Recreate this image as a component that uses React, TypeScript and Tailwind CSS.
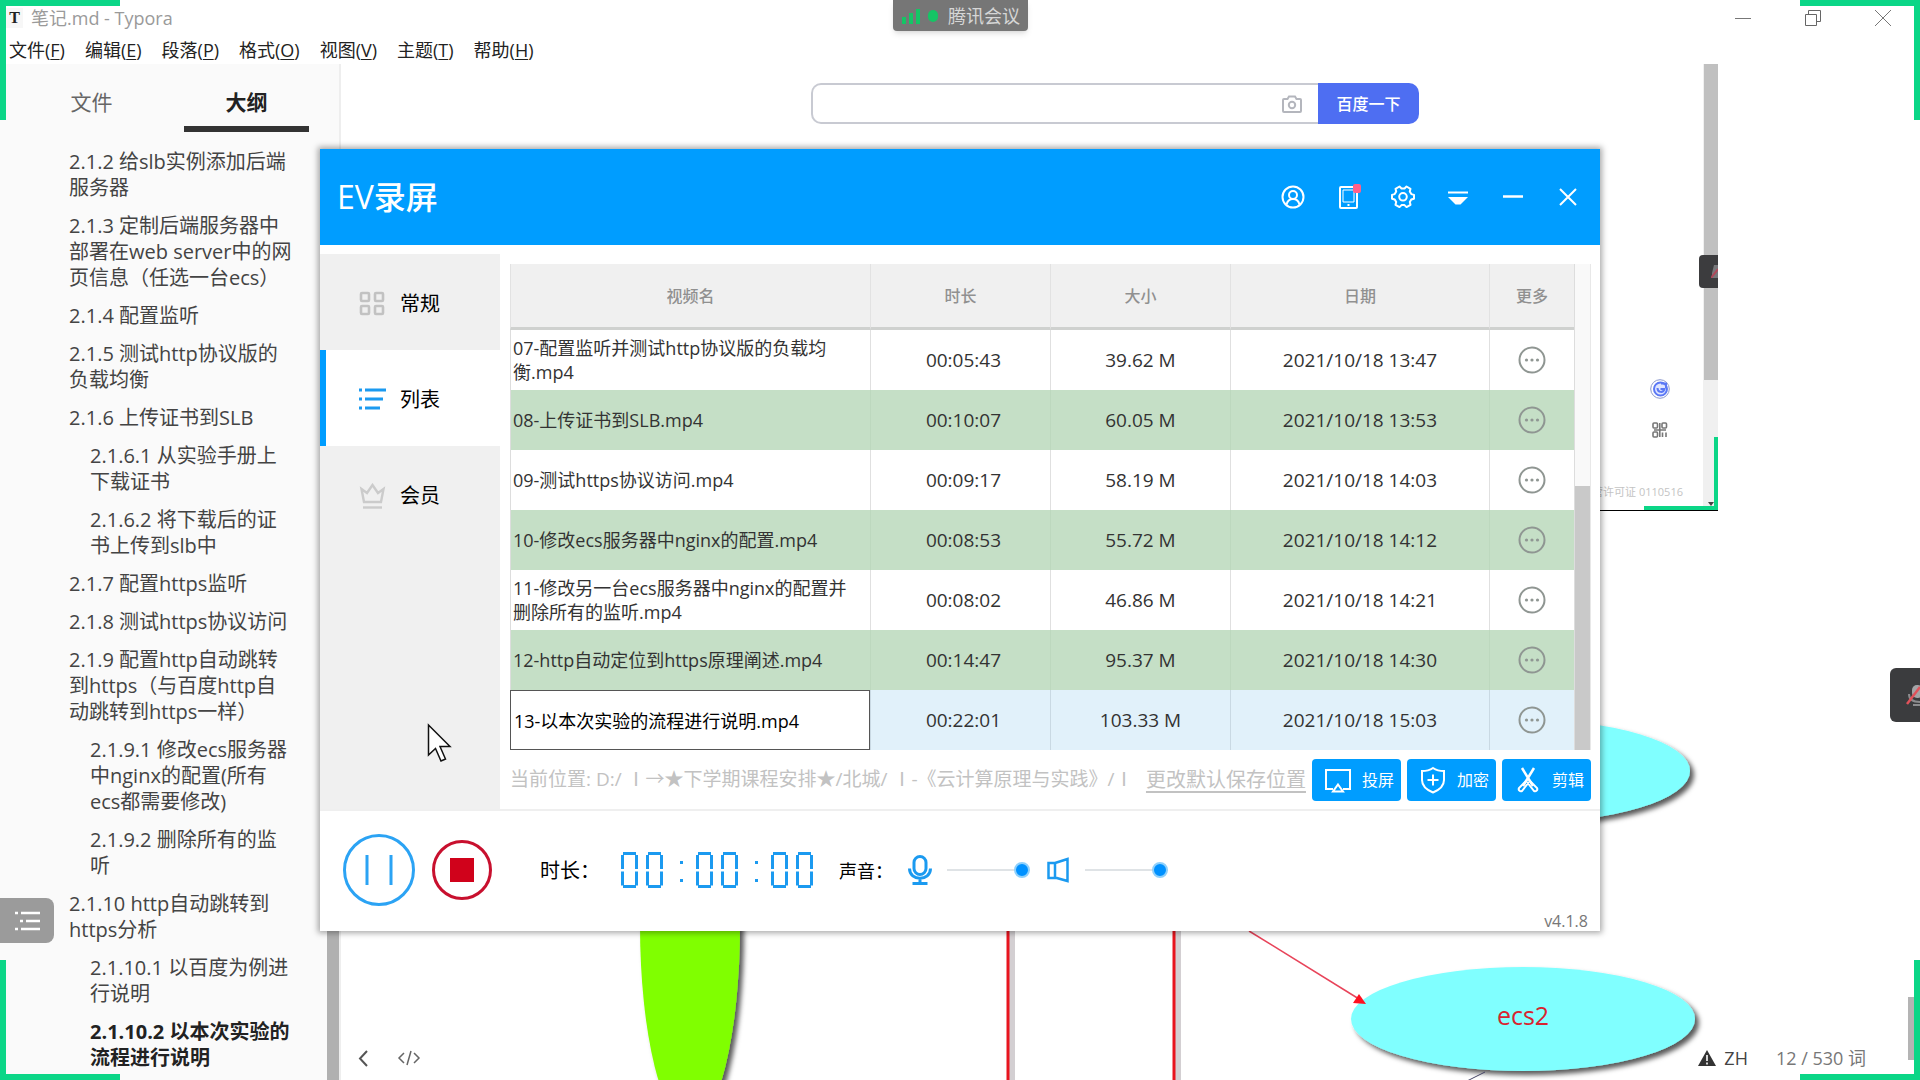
import type { ReactNode } from "react";

const FONT = "font-['Open_Sans','Noto_Sans_CJK_SC',sans-serif]";

const menus: [string, string][] = [
  ["文件", "F"],
  ["编辑", "E"],
  ["段落", "P"],
  ["格式", "O"],
  ["视图", "V"],
  ["主题", "T"],
  ["帮助", "H"],
];

const outline: { text: string; deep?: boolean; active?: boolean }[] = [
  { text: "2.1.2 给slb实例添加后端\n服务器" },
  { text: "2.1.3 定制后端服务器中\n部署在web server中的网\n页信息（任选一台ecs）" },
  { text: "2.1.4 配置监听" },
  { text: "2.1.5 测试http协议版的\n负载均衡" },
  { text: "2.1.6 上传证书到SLB" },
  { text: "2.1.6.1 从实验手册上\n下载证书", deep: true },
  { text: "2.1.6.2 将下载后的证\n书上传到slb中", deep: true },
  { text: "2.1.7 配置https监听" },
  { text: "2.1.8 测试https协议访问" },
  { text: "2.1.9 配置http自动跳转\n到https（与百度http自\n动跳转到https一样）" },
  { text: "2.1.9.1 修改ecs服务器\n中nginx的配置(所有\necs都需要修改)", deep: true },
  { text: "2.1.9.2 删除所有的监\n听", deep: true },
  { text: "2.1.10 http自动跳转到\nhttps分析" },
  { text: "2.1.10.1 以百度为例进\n行说明", deep: true },
  { text: "2.1.10.2 以本次实验的\n流程进行说明", deep: true, active: true },
];

const videos = [
  ["07-配置监听并测试http协议版的负载均\n衡.mp4", "00:05:43", "39.62 M", "2021/10/18 13:47"],
  ["08-上传证书到SLB.mp4", "00:10:07", "60.05 M", "2021/10/18 13:53"],
  ["09-测试https协议访问.mp4", "00:09:17", "58.19 M", "2021/10/18 14:03"],
  ["10-修改ecs服务器中nginx的配置.mp4", "00:08:53", "55.72 M", "2021/10/18 14:12"],
  ["11-修改另一台ecs服务器中nginx的配置并\n删除所有的监听.mp4", "00:08:02", "46.86 M", "2021/10/18 14:21"],
  ["12-http自动定位到https原理阐述.mp4", "00:14:47", "95.37 M", "2021/10/18 14:30"],
  ["13-以本次实验的流程进行说明.mp4", "00:22:01", "103.33 M", "2021/10/18 15:03"],
];

function TitleBar() {
  return (
    <header className="flex h-[35px] items-center pl-[6px] pr-[29px] text-[#9a9a9a]">
      <span className="flex h-5 w-[17px] items-center justify-center bg-[#f7f7f7] font-['Liberation_Serif',serif] text-base font-bold text-[#222]">
        T
      </span>
      <h1 className="ml-2 text-lg">笔记.md - Typora</h1>
      <div className="ml-auto flex gap-[54px]">
        <button aria-label="最小化">
          <svg width="16" height="16" viewBox="0 0 16 16" stroke="#777" fill="none">
            <path d="M0 8.500h16" />
          </svg>
        </button>
        <button aria-label="还原">
          <svg width="16" height="16" viewBox="0 0 16 16" stroke="#666" fill="none">
            <path d="M.5 4.500h11v11H.5zM3.500 4.500v-4h12v11h-4" />
          </svg>
        </button>
        <button aria-label="关闭">
          <svg width="16" height="16" viewBox="0 0 16 16" stroke="#777" fill="none">
            <path d="M0 0l16 16M16 0L0 16" />
          </svg>
        </button>
      </div>
    </header>
  );
}

function MenuBar() {
  return (
    <nav className="flex h-[29px] items-center gap-5 pl-[9px] text-lg text-[#222]">
      {menus.map(([name, key]) => (
        <button key={key} className="whitespace-nowrap">
          {name}(<u className="underline-offset-2">{key}</u>)
        </button>
      ))}
    </nav>
  );
}

function Outline() {
  return (
    <aside className="w-[341px] shrink-0 border-r-2 border-[#eee] bg-[#fafafa]">
      <div className="flex gap-[30px] pl-[29px] pt-3 text-[21px]">
        <button className="h-14 w-[125px] border-b-[6px] border-transparent pt-[3px] text-[#666]">文件</button>
        <button className="h-14 w-[125px] border-b-[6px] border-[#333] pt-[3px] font-bold text-[#222]">大纲</button>
      </div>
      <ul className="pt-[11px] text-xl leading-[26px] text-[#444]">
        {outline.map((o) => (
          <li key={o.text} className={o.deep ? "py-[6px] pl-[90px]" : "py-[6px] pl-[69px]"}>
            <a href="#outline" className={o.active ? "block whitespace-pre font-bold text-[#222]" : "block whitespace-pre"}>
              {o.text}
            </a>
          </li>
        ))}
      </ul>
    </aside>
  );
}

function BaiduPage() {
  return (
    <div className="relative h-[447px] w-[1377px] max-w-full shrink-0 border-b border-black">
      <form className="ml-[470px] flex w-[608px] pt-[19px]">
        <div className="flex h-[41px] flex-1 items-center rounded-l-[10px] border-2 border-r-0 border-[#c8cad2] pr-4">
          <input aria-label="搜索" className="min-w-0 flex-1 px-3 outline-none" />
          <svg width="20" height="18" viewBox="0 0 20 18" fill="none" stroke="#b4b6bd" strokeWidth="2">
            <path d="M2 4h3.500l1.500-2.500h6L14.500 4H18a1 1 0 011 1v11a1 1 0 01-1 1H2a1 1 0 01-1-1V5a1 1 0 011-1z" />
            <circle cx="10" cy="10" r="3.200" />
          </svg>
        </div>
        <button type="button" className="h-[41px] w-[101px] rounded-r-[10px] bg-[#4e6ef2] text-base font-medium text-white">
          百度一下
        </button>
      </form>
      <div className="absolute bottom-0 right-0 top-0 flex w-[15px] flex-col items-center bg-[#f0f0f0]">
        <div className="h-[316px] w-[14px] bg-[#c0c0c0]" />
        <svg className="mb-1 mt-auto" width="6" height="4" viewBox="0 0 6 4" fill="#444">
          <path d="M0 0h6L3 4z" />
        </svg>
      </div>
      <div className="absolute right-0 top-[191px] flex h-[33px] w-[19px] items-center justify-end rounded-l bg-[#3c3c3e]">
        <svg width="7" height="13" viewBox="0 0 7 13">
          <path d="M3 0h4v13H1V8z" fill="#77777a" />
          <path d="M0 13l7-9" stroke="#b0485a" strokeWidth="2" />
        </svg>
      </div>
      <div className="absolute bottom-0 right-0 h-[73px] w-[4px] bg-[#0bd687]" />
      <div className="absolute bottom-0 right-0 h-[4px] w-[74px] bg-[#0bd687]" />
      <div className="absolute right-[48px] top-[315px] flex flex-col items-center gap-[23px]">
        <svg width="20" height="20" viewBox="0 0 20 20" fill="none">
          <circle cx="10" cy="10" r="9.300" stroke="#8c98cc" />
          <circle cx="10.500" cy="10" r="6.500" fill="#dfe5ff" stroke="#5b78f5" strokeWidth="2" />
          <path d="M7.500 9c0 5 6 5 7 1h-4M11 4.500h5V9" stroke="#5b78f5" strokeWidth="2" />
        </svg>
        <svg width="16" height="16" viewBox="0 0 16 16" fill="none" stroke="#777" strokeWidth="1.600">
          <rect x="1" y="1" width="4.500" height="5" rx="1" />
          <rect x="10" y="1" width="4.500" height="5" rx="1" />
          <rect x="1" y="10" width="4.500" height="5" rx="1" />
          <path d="M7.800 1v14M2 8h12M10.500 10.500V15M14 10.500V15" />
        </svg>
      </div>
      <span className="absolute bottom-[10px] right-[35px] whitespace-nowrap text-[11px] leading-4 text-[#c4c4c4]">
        经营许可证 0110516
      </span>
    </div>
  );
}

function Diagram() {
  return (
    <svg className="block w-full" viewBox="341 511 1579 569" role="img" aria-label="负载均衡拓扑图">
      <defs>
        <filter id="shadow" x="-20%" y="-20%" width="140%" height="140%">
          <feDropShadow dx="4" dy="4" stdDeviation="2.500" floodOpacity="0.650" />
        </filter>
      </defs>
      <ellipse cx="690" cy="925" rx="50" ry="200" fill="#80ff00" filter="url(#shadow)" />
      <g fill="#80ffff" filter="url(#shadow)">
        <ellipse cx="1518" cy="771" rx="172" ry="52" />
        <ellipse cx="1523" cy="1019" rx="172" ry="52" />
      </g>
      <path d="M1012 900v180M1178 900v180" stroke="#d3cfd2" strokeWidth="6" />
      <path d="M1008 900v180M1174 900v180" stroke="#e8141e" strokeWidth="3" />
      <path d="M1249 931l110 68" stroke="#e8445a" strokeWidth="1.500" />
      <path d="M1366 1004l-13-1 6-9z" fill="#ff1020" />
      <path d="M1485 1072l-18 9" stroke="#446" />
      <text x="1523" y="1025" textAnchor="middle" fontSize="25" fill="#d8232f">
        ecs2
      </text>
    </svg>
  );
}

function StatusBar() {
  return (
    <div className="absolute bottom-2 left-[341px] right-[54px] flex h-7 items-center text-lg text-[#777]">
      <button aria-label="返回" className="ml-[17px]">
        <svg width="10" height="17" viewBox="0 0 10 17" fill="none" stroke="#555" strokeWidth="2">
          <path d="M9 1L2 8.500 9 16" />
        </svg>
      </button>
      <button aria-label="源代码模式" className="ml-[29px]">
        <svg width="24" height="16" viewBox="0 0 24 16" fill="none" stroke="#666" strokeWidth="1.500">
          <path d="M7 3L2 8l5 5M17 3l5 5-5 5M14 1l-4 14" />
        </svg>
      </button>
      <svg className="ml-auto" width="18" height="16" viewBox="0 0 18 16">
        <path d="M9 0l9 16H0z" fill="#333" />
        <path d="M9 5v6M9 12.500v2" stroke="#fff" strokeWidth="1.600" />
      </svg>
      <span className="ml-2 text-[#444]">ZH</span>
      <span className="ml-7">12 / 530 词</span>
    </div>
  );
}

function HeaderIcon({ label, children }: { label: string; children: ReactNode }) {
  return (
    <button aria-label={label} className="flex w-[55px] justify-center">
      <svg width="26" height="26" viewBox="0 0 26 26" fill="none" stroke="#fff" strokeWidth="2">
        {children}
      </svg>
    </button>
  );
}

function EvHeader() {
  return (
    <header className="flex h-24 items-center bg-[#009dff] pl-[17px] pr-1 text-white">
      <h2 className="mr-auto text-[32px] font-medium leading-10">EV录屏</h2>
      <HeaderIcon label="账号">
        <circle cx="13" cy="13" r="10.500" />
        <circle cx="13" cy="11" r="4" />
        <path d="M6.500 20.500c1-4 4-5.500 6.500-5.500s5.500 1.500 6.500 5.500" />
      </HeaderIcon>
      <HeaderIcon label="手机">
        <rect x="5" y="3" width="17" height="21" rx="1" />
        <path d="M8 6h11v12H8z" strokeWidth="1" />
        <path d="M12.500 21h2" />
        <rect x="18" y="0" width="8" height="9" rx="2" fill="#ff5f8a" stroke="none" />
      </HeaderIcon>
      <HeaderIcon label="设置">
        <path
          d="M9.500 2.500l2 2h3l2-2 4 2.300-.7 2.700 1.500 2.600 2.700.8v3.800l-2.700.8-1.500 2.600.7 2.700-4 2.300-2-2h-3l-2 2-4-2.300.7-2.700-1.500-2.600-2.700-.8v-3.800l2.700-.8 1.500-2.600-.7-2.700z"
          strokeLinejoin="round"
        />
        <circle cx="13" cy="12.800" r="3.800" />
      </HeaderIcon>
      <HeaderIcon label="菜单">
        <path d="M3 8.500h20" />
        <path d="M3 13h20l-7.500 7.500h-5z" fill="#fff" stroke="none" />
      </HeaderIcon>
      <HeaderIcon label="最小化">
        <path d="M3 12.500h20" strokeWidth="2.500" />
      </HeaderIcon>
      <HeaderIcon label="关闭">
        <path d="M5 5l16 16M21 5L5 21" />
      </HeaderIcon>
    </header>
  );
}

function EvNav() {
  const base = "flex h-24 w-full items-center gap-[14px] border-l-[6px] pl-[33px] pt-[3px] text-xl text-black";
  return (
    <nav className="mt-[9px] w-[180px] shrink-0 bg-[#f0f0f0]">
      <button className={`${base} border-transparent`}>
        <svg width="27" height="26" viewBox="0 0 27 26" fill="none" stroke="#c2c2c2" strokeWidth="2.600">
          <rect x="2" y="2" width="8" height="8" rx="1" />
          <rect x="16" y="2" width="8" height="8" rx="1" />
          <rect x="2" y="15" width="8" height="8" rx="1" />
          <rect x="16" y="15" width="8" height="8" rx="1" />
        </svg>
        常规
      </button>
      <button className={`${base} border-[#009dff] bg-white`}>
        <svg width="27" height="26" viewBox="0 0 27 26" stroke="#1b9af0" strokeWidth="3">
          <path d="M0 3h3M6 3h21M0 12h3M6 12h18M0 21h3M6 21h15" />
        </svg>
        列表
      </button>
      <button className={`${base} border-transparent`}>
        <svg width="27" height="26" viewBox="0 0 27 26" fill="none" stroke="#cbcbcb" strokeWidth="2.400">
          <path d="M2.500 6l5.500 4 5.500-8 5.500 8 5.500-4-2.500 13H5z" />
          <path d="M4 24.500h19" />
        </svg>
        会员
      </button>
    </nav>
  );
}

function VideoTable() {
  const th = "border-b-[3px] border-[#cfd1cf] border-l border-l-[#e2e2e2] bg-[#f0f0f0] text-base font-medium text-[#909090]";
  return (
    <div className="flex">
      <table className="w-full table-fixed border-separate border-spacing-0 border-r border-[#ddd]">
        <colgroup>
          <col />
          <col className="w-[180px]" />
          <col className="w-[180px]" />
          <col className="w-[259px]" />
          <col className="w-[85px]" />
        </colgroup>
        <thead>
          <tr className="h-[66px]">
            <th className={th}>视频名</th>
            <th className={th}>时长</th>
            <th className={th}>大小</th>
            <th className={th}>日期</th>
            <th className={th}>更多</th>
          </tr>
        </thead>
        <tbody>
          {videos.map(([name, time, size, date], i) => {
            const selected = i === videos.length - 1;
            const td = selected
              ? "border-l border-[#c9d9e3] text-center text-[19px]"
              : i % 2
                ? "border-l border-[#bdd8be] text-center text-[19px]"
                : "border-l border-[#e0e0e0] text-center text-[19px]";
            return (
              <tr
                key={name}
                className={
                  selected
                    ? "h-[60px] bg-[#e1f1fa] text-[#333]"
                    : i % 2
                      ? "h-[60px] bg-[#c5dfc6] text-[#333]"
                      : "h-[60px] bg-white text-[#333]"
                }
              >
                {selected ? (
                  <td className="p-0">
                    <input
                      aria-label="视频名"
                      defaultValue={name}
                      className="block h-[60px] w-full border border-[#555] bg-white pl-[3px] text-lg text-black outline-none"
                    />
                  </td>
                ) : (
                  <td className="whitespace-pre border-l border-[#ddd] pl-[2px] text-lg leading-6">{name}</td>
                )}
                <td className={`${td} pl-1.5`}>{time}</td>
                <td className={td}>{size}</td>
                <td className={td}>{date}</td>
                <td className={td}>
                  <button aria-label="更多" className="block w-full">
                    <svg className="mx-auto" width="28" height="28" viewBox="0 0 28 28" fill="#8f9692">
                      <circle cx="14" cy="14" r="12.500" fill="none" stroke="#8f9692" strokeWidth="2" />
                      <circle cx="8.500" cy="14" r="1.600" />
                      <circle cx="14" cy="14" r="1.600" />
                      <circle cx="19.500" cy="14" r="1.600" />
                    </svg>
                  </button>
                </td>
              </tr>
            );
          })}
        </tbody>
      </table>
      <div className="flex w-4 shrink-0 flex-col justify-end border-r border-[#e8e8e8] bg-[#f9f9f9]">
        <div className="h-[264px] bg-[#c9c9c9]" />
      </div>
    </div>
  );
}

function ActionButton({ label, children }: { label: string; children: ReactNode }) {
  return (
    <button className="flex h-[42px] w-[89px] shrink-0 items-center justify-between rounded bg-[#009dff] pl-3 pr-[7px] text-base text-white">
      <svg width="28" height="28" viewBox="0 0 28 28" fill="none" stroke="#fff" strokeWidth="2">
        {children}
      </svg>
      {label}
    </button>
  );
}

function LocationRow() {
  return (
    <div className="flex h-[59px] items-center gap-[6px] text-[#c2c2c2]">
      <p className="min-w-0 flex-1 overflow-hidden whitespace-nowrap text-[19px]">
        当前位置: D:/ Ⅰ→★下学期课程安排★/北城/ Ⅰ-《云计算原理与实践》/Ⅰ
      </p>
      <a href="#path" className="whitespace-nowrap text-xl underline underline-offset-4">
        更改默认保存位置
      </a>
      <ActionButton label="投屏">
        <path d="M9 23H2V4h24v19h-7" />
        <path d="M14 18.500l5 7H9z" />
      </ActionButton>
      <ActionButton label="加密">
        <path d="M14 2c3 2 7 3 11 3v9c0 6-5 10-11 12.500C8 24 3 20 3 14V5c4 0 8-1 11-3z" />
        <path d="M14 8.500v11M8.500 14h11" />
      </ActionButton>
      <ActionButton label="剪辑">
        <path d="M8 2l11 18M20 2L9 20" strokeWidth="2.500" />
        <path d="M13 14l-8 8c-1 2 1 4 3 3l7-9M15 14l8 8c1 2-1 4-3 3l-7-9" />
      </ActionButton>
    </div>
  );
}

function Clock() {
  const digits = [0, 25, 75, 100, 150, 175];
  return (
    <svg width="192" height="36" viewBox="0 0 192 36" role="img" aria-label="00:00:00" fill="none" stroke="#1b9af0">
      {digits.map((x) => (
        <g key={x} strokeWidth="3">
          <path d={`M${x + 2} 1.500h13M${x + 2} 34.500h13`} />
          <path d={`M${x + 1.5} 3v14M${x + 15.5} 3v14M${x + 1.5} 19.500v14M${x + 15.5} 19.500v14`} />
        </g>
      ))}
      <path d="M59 10.500h3M59 28.500h3M134 10.500h3M134 28.500h3" strokeWidth="3" />
    </svg>
  );
}

function Volume({ label }: { label: string }) {
  return (
    <input
      type="range"
      aria-label={label}
      defaultValue={100}
      className="h-4 w-[83px] appearance-none bg-transparent [&::-webkit-slider-runnable-track]:h-[2px] [&::-webkit-slider-runnable-track]:bg-[#dfe3e6] [&::-webkit-slider-thumb]:-mt-[7px] [&::-webkit-slider-thumb]:size-4 [&::-webkit-slider-thumb]:appearance-none [&::-webkit-slider-thumb]:rounded-full [&::-webkit-slider-thumb]:border-2 [&::-webkit-slider-thumb]:border-[#8fd0fb] [&::-webkit-slider-thumb]:bg-[#0091ff]"
    />
  );
}

function EvControls() {
  return (
    <footer className="relative flex h-[122px] items-center border-t-2 border-[#efefef] pb-[3px] pl-[23px] text-black">
      <button aria-label="暂停">
        <svg width="72" height="72" viewBox="0 0 72 72" fill="none" stroke="#2ba3f4" strokeWidth="3">
          <circle cx="36" cy="36" r="34.500" />
          <path d="M24 21v30M48 21v30" />
        </svg>
      </button>
      <button aria-label="停止" className="ml-[17px]">
        <svg width="60" height="60" viewBox="0 0 60 60">
          <circle cx="30" cy="30" r="28.500" fill="none" stroke="#c8102e" strokeWidth="3" />
          <path d="M18 18h24v24H18z" fill="#d0021b" />
        </svg>
      </button>
      <span className="ml-12 w-[81px] pt-[3px] text-xl">时长：</span>
      <Clock />
      <span className="ml-[26px] w-[69px] whitespace-nowrap pt-[3px] text-lg">声音：</span>
      <svg width="24" height="30" viewBox="0 0 24 30" fill="none" stroke="#1b9af0" strokeWidth="3">
        <rect x="6" y="1.500" width="12" height="18" rx="6" />
        <path d="M1.500 13.500c0 13 21 13 21 0M12 24v4M4.500 28.500h15" />
      </svg>
      <div className="ml-[15px] flex">
        <Volume label="麦克风音量" />
      </div>
      <svg className="ml-[17px]" width="22" height="26" viewBox="0 0 22 26" fill="none" stroke="#1b9af0" strokeWidth="2.500">
        <path d="M1.500 6H8v15H1.500zM8 6l12.500-4v22L8 20.500" />
      </svg>
      <div className="ml-4 flex">
        <Volume label="扬声器音量" />
      </div>
      <span className="absolute bottom-0 right-3 text-base leading-5 text-[#777]">v4.1.8</span>
    </footer>
  );
}

function EvRecorder() {
  return (
    <section className="absolute left-1/6 top-[149px] w-2/3 bg-white shadow-[0_0_6px_2px_rgba(0,0,0,0.35)]">
      <EvHeader />
      <div className="flex">
        <EvNav />
        <div className="min-w-0 flex-1 pl-[10px] pr-[9px] pt-[19px]">
          <VideoTable />
          <LocationRow />
        </div>
      </div>
      <EvControls />
    </section>
  );
}

function MeetingBadge() {
  return (
    <div className="absolute left-[893px] top-0 flex h-[31px] w-[135px] items-center rounded-b bg-[#767676] pl-[9px] text-lg text-[#d6d6d6] shadow-md">
      <svg className="mr-[9px]" width="37" height="16" viewBox="0 0 37 16" fill="#14c565">
        <path d="M0 9h4v7H0zM7 5h4v11H7zM14 1h4v15h-4z" />
        <rect x="26" y="2" width="10" height="12" rx="5" />
      </svg>
      腾讯会议
    </div>
  );
}

export default function App() {
  return (
    <main className={`relative flex h-screen flex-col overflow-hidden bg-white ${FONT}`}>
      <TitleBar />
      <MenuBar />
      <div className="flex min-h-0 flex-1">
        <Outline />
        <article className="flex min-w-0 flex-1 flex-col">
          <BaiduPage />
          <Diagram />
        </article>
      </div>
      <div className="absolute bottom-0 left-[327px] h-[149px] w-3 bg-[#b0b0b0]" />
      <div className="absolute bottom-5 right-[6px] h-[63px] w-[6px] bg-[#b4b4b4]" />
      <StatusBar />
      <button aria-label="侧边栏" className="absolute left-0 top-[898px] flex h-[45px] w-[54px] items-center justify-center rounded-r-lg bg-[#9b9b9b]">
        <svg width="25" height="20" viewBox="0 0 25 20" stroke="#fff" strokeWidth="2.400">
          <path d="M0 2h3M6 2h19M5 10h3M11 10h14M0 18h3M6 18h19" />
        </svg>
      </button>
      <EvRecorder />
      <MeetingBadge />
      <button aria-label="麦克风已静音" className="absolute right-0 top-[668px] flex h-[54px] w-[30px] items-center justify-end rounded-l-md bg-[#3b3c3e]">
        <svg width="14" height="22" viewBox="0 0 14 22" fill="none">
          <rect x="6" y="1" width="11" height="13" rx="5" fill="#a4a4a6" />
          <path d="M3 10c0 6 4 8 11 8M7 21h7" stroke="#8c8c8e" strokeWidth="2" />
          <path d="M1 20L14 3" stroke="#e0525a" strokeWidth="2.500" />
        </svg>
      </button>
      <svg className="absolute left-[427px] top-[723px]" width="25" height="40" viewBox="0 0 25 40" fill="#fff" stroke="#111" strokeWidth="1.500">
        <path d="M1.500 2v30l7-6.500 5.500 12.500 4.500-2L13 23.500h10z" />
      </svg>
      <div className="pointer-events-none absolute left-0 top-0 size-[120px] border-l-[6px] border-t-[6px] border-[#0bd687]" />
      <div className="pointer-events-none absolute right-0 top-0 size-[120px] border-r-[6px] border-t-[6px] border-[#0bd687]" />
      <div className="pointer-events-none absolute bottom-0 left-0 size-[120px] border-b-[6px] border-l-[6px] border-[#0bd687]" />
      <div className="pointer-events-none absolute bottom-0 right-0 size-[120px] border-b-[6px] border-r-[6px] border-[#0bd687]" />
    </main>
  );
}
